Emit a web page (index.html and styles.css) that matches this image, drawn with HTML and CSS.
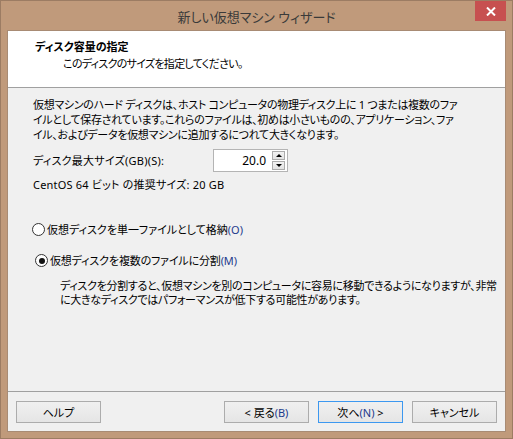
FILE: index.html
```html
<!DOCTYPE html>
<html lang="ja">
<head>
<meta charset="utf-8">
<title>新しい仮想マシン ウィザード</title>
<link rel="stylesheet" href="styles.css">
</head>
<body>
<div class="window">
  <div class="titlebar">
    <div class="tb-side"></div>
    <div class="title">新しい仮想マシン ウィザード</div>
    <div class="tb-side tb-right">
      <div class="close">
        <svg width="10" height="9" viewBox="0 0 10 9"><path d="M1 0.5 L9 8.5 M9 0.5 L1 8.5" stroke="#fff" stroke-width="2" fill="none"/></svg>
      </div>
    </div>
  </div>
  <div class="client">
    <div class="header">
      <div class="h-title">ディスク容量の指定</div>
      <div class="h-sub">このディスクのサイズを指定してください。</div>
    </div>
    <div class="content">
      <p class="intro">仮想マシンのハード ディスクは、ホスト コンピュータの物理ディスク上に 1 つまたは複数のファ<br>イルとして保存されています。これらのファイルは、初めは小さいものの、アプリケーション、ファ<br>イル、およびデータを仮想マシンに追加するにつれて大きくなります。</p>
      <div class="size-row">
        <span class="label">ディスク最大サイズ(GB)(S):</span>
        <div class="spin">
          <span class="value">20.0</span>
          <div class="spin-btns">
            <div class="sb"><span class="tri-up"></span></div>
            <div class="sb"><span class="tri-down"></span></div>
          </div>
        </div>
      </div>
      <div class="rec">CentOS 64 ビット の推奨サイズ: 20 GB</div>
      <div class="radio r1"><span class="rb"></span><span class="rlabel">仮想ディスクを単一ファイルとして格納<span class="acc">(O)</span></span></div>
      <div class="radio r2"><span class="rb checked"></span><span class="rlabel">仮想ディスクを複数のファイルに分割<span class="acc">(M)</span></span></div>
      <p class="desc">ディスクを分割すると、仮想マシンを別のコンピュータに容易に移動できるようになりますが、非常<br>に大きなディスクではパフォーマンスが低下する可能性があります。</p>
    </div>
    <div class="footer">
      <button class="btn">ヘルプ</button>
      <div class="spacer"></div>
      <button class="btn">&lt; 戻る<span class="acc">(B)</span></button>
      <button class="btn default">次へ<span class="acc">(N)</span> &gt;</button>
      <button class="btn">キャンセル</button>
    </div>
  </div>
</div>
</body>
</html>
```
FILE: styles.css
```css
* { box-sizing: border-box; }
html, body { margin: 0; padding: 0; }
body {
  width: 513px;
  height: 439px;
  overflow: hidden;
  font-family: "Noto Sans", "Noto Sans CJK JP", sans-serif;
  font-feature-settings: "palt";
  font-size: 11px;
  color: #000;
}
.window {
  width: 513px;
  height: 439px;
  background: #c09a7b;
  border: 1px solid #9c7c63;
  display: flex;
  flex-direction: column;
}
.titlebar {
  height: 29px;
  display: grid;
  grid-template-columns: 1fr auto 1fr;
  align-items: start;
}
.title {
  font-size: 13px;
  line-height: 18px;
  padding-top: 7px;
  color: #3a3a3a;
  white-space: nowrap;
}
.tb-right {
  display: flex;
  justify-content: flex-end;
  padding-right: 6px;
}
.close {
  width: 31px;
  height: 20px;
  background: #c75050;
  display: flex;
  align-items: center;
  justify-content: center;
}
.client {
  margin: 0 6px 6px 6px;
  height: 402px;
  border: 1px solid #a88b74;
  background: #f0f0f0;
  display: flex;
  flex-direction: column;
}
.header {
  height: 57px;
  background: #fff;
  border-bottom: 1px solid #a0a0a0;
  padding: 8px 0 0 27px;
}
.h-title {
  font-weight: bold;
  line-height: 16px;
}
.h-sub {
  line-height: 16px;
  margin-top: 1px;
  padding-left: 28px;
  letter-spacing: -0.7px;
}
.content {
  flex: 1;
  padding: 9px 0 0 25px;
}
.intro {
  margin: 0;
  line-height: 15px;
  white-space: nowrap;
  letter-spacing: -0.3px;
}
.size-row {
  margin-top: 7px;
  display: grid;
  grid-template-columns: 180px 75px;
  align-items: center;
}
.label { line-height: 15px; letter-spacing: 0.25px; }
.spin {
  height: 23px;
  border: 1px solid #b4b4b4;
  background: #fff;
  display: flex;
  align-items: center;
  justify-content: flex-end;
  padding-right: 2px;
}
.value {
  font-size: 12px;
  line-height: 15px;
  padding-right: 6px;
}
.spin-btns {
  display: flex;
  flex-direction: column;
  gap: 1px;
}
.sb {
  width: 13px;
  height: 9px;
  border: 1px solid #acacac;
  background: linear-gradient(#f2f2f2, #e3e3e3);
  display: flex;
  align-items: center;
  justify-content: center;
}
.tri-up {
  width: 0; height: 0;
  border-left: 3px solid transparent;
  border-right: 3px solid transparent;
  border-bottom: 3px solid #000;
}
.tri-down {
  width: 0; height: 0;
  border-left: 3px solid transparent;
  border-right: 3px solid transparent;
  border-top: 3px solid #000;
}
.rec {
  margin-top: 5px;
  line-height: 15px;
  letter-spacing: 0.2px;
}
.radio {
  display: flex;
  align-items: center;
  line-height: 15px;
}
.r1 { margin-top: 30px; margin-left: -1px; gap: 2px; }
.r2 { margin-top: 16px; margin-left: 2px; gap: 2px; letter-spacing: -0.15px; }
.rb {
  width: 13px;
  height: 13px;
  border-radius: 50%;
  border: 1px solid #333;
  background: #fff;
  display: flex;
  align-items: center;
  justify-content: center;
}
.rb.checked::after {
  content: "";
  width: 6px;
  height: 6px;
  border-radius: 50%;
  background: #111;
}
.acc { color: #1d3a8c; }
.desc {
  margin: 11px 0 0 27px;
  line-height: 14px;
  white-space: nowrap;
  letter-spacing: -0.3px;
}
.footer {
  height: 40px;
  border-top: 1px solid #a0a0a0;
  padding: 9px 8px 8px 8px;
  display: flex;
  gap: 9px;
}
.spacer { flex: 1; }
.btn {
  width: 85px;
  height: 22px;
  margin: 0;
  padding: 0;
  border: 1px solid #acacac;
  background: linear-gradient(#f0f0f0, #e5e5e5);
  font-family: inherit;
  font-feature-settings: "palt";
  font-size: 11px;
  line-height: 15px;
  color: #000;
}
.btn.default { border-color: #3c98f0; }
```
